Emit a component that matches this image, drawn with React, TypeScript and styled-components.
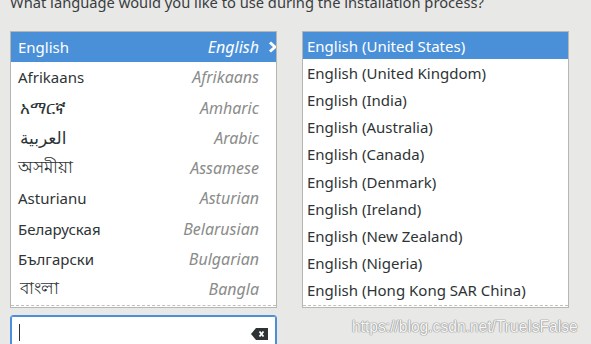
import React from "react";
import styled, { createGlobalStyle } from "styled-components";

const GlobalStyle = createGlobalStyle`
  html, body { margin: 0; padding: 0; }
  body {
    background: #e8e8e7;
    font-family: "Noto Sans", "DejaVu Sans", sans-serif;
    color: #2e3436;
    overflow: hidden;
  }
`;

const Page = styled.div`
  width: 591px;
  height: 344px;
  overflow: hidden;
  position: relative;
  box-sizing: border-box;
  padding-left: 10px;
`;

const Title = styled.div`
  font-size: 14.7px;
  line-height: 16px;
  margin-top: -6px;
  height: 16px;
  color: #3a3d3e;
  white-space: nowrap;
`;

const Columns = styled.div`
  display: grid;
  grid-template-columns: 267px 267px;
  column-gap: 25px;
  margin-top: 21px;
  align-items: start;
`;

const LeftColumn = styled.div`
  display: flex;
  flex-direction: column;
  gap: 7px;
`;

const ListBox = styled.div`
  position: relative;
  height: 277px;
  box-sizing: border-box;
  border: 1px solid #b6b6b3;
  background: #ffffff;
  overflow: hidden;
  &::after {
    content: "";
    position: absolute;
    left: 0;
    right: 0;
    bottom: 1px;
    border-bottom: 1px dashed #c0c0bd;
  }
`;

const LangRow = styled.div<{ $selected?: boolean }>`
  height: 30.25px;
  display: flex;
  align-items: center;
  justify-content: space-between;
  padding: 0 17px 0 7px;
  box-sizing: border-box;
  font-size: 15px;
  background: ${(p) => (p.$selected ? "#4a90d9" : "transparent")};
  color: ${(p) => (p.$selected ? "#ffffff" : "#2e3436")};
  position: relative;
`;

const Native = styled.span<{ $size: number; $indent: number }>`
  white-space: nowrap;
  font-size: ${(p) => p.$size}px;
  padding-left: ${(p) => p.$indent}px;
`;

const English = styled.span<{ $selected?: boolean }>`
  font-style: italic;
  font-size: 16px;
  white-space: nowrap;
  color: ${(p) => (p.$selected ? "#ffffff" : "#8a8c8a")};
`;

const Chevron = styled.svg`
  position: absolute;
  right: -2px;
  top: 50%;
  margin-top: -6px;
`;

const LocaleRow = styled.div<{ $selected?: boolean }>`
  height: 27.2px;
  display: flex;
  align-items: center;
  padding: 0 4px;
  box-sizing: border-box;
  font-size: 15px;
  white-space: nowrap;
  background: ${(p) => (p.$selected ? "#4a90d9" : "transparent")};
  color: ${(p) => (p.$selected ? "#ffffff" : "#2e3436")};
`;

const Entry = styled.div`
  height: 40px;
  box-sizing: border-box;
  border: 1px solid #4a90d9;
  box-shadow: inset 0 0 0 1px #4a90d9;
  background: #ffffff;
  border-radius: 3px 3px 0 0;
  display: flex;
  align-items: flex-start;
  justify-content: space-between;
  padding: 8px 8px 0 8px;
`;

const Caret = styled.div`
  width: 1px;
  height: 17px;
  background: #2e3436;
`;

const ClearIcon = styled.svg`
  margin-top: 4px;
`;

const Watermark = styled.div`
  position: absolute;
  left: 352px;
  top: 318px;
  font-family: "Liberation Sans", Arial, sans-serif;
  font-size: 15.6px;
  color: #f6f6f6;
  text-shadow: 0 0 1px #999999, 0 0 1px #999999, 0 0 1px #999999, 0 0 1px #999999;
  white-space: nowrap;
`;

type Lang = { native: string; eng: string; size: number; indent: number };

const languages: Lang[] = [
  { native: "English", eng: "English", size: 15, indent: 0 },
  { native: "Afrikaans", eng: "Afrikaans", size: 15, indent: 0 },
  { native: "አማርኛ", eng: "Amharic", size: 17, indent: 2 },
  { native: "العربية", eng: "Arabic", size: 17, indent: 2 },
  { native: "অসমীয়া", eng: "Assamese", size: 17, indent: 0 },
  { native: "Asturianu", eng: "Asturian", size: 15, indent: 0 },
  { native: "Беларуская", eng: "Belarusian", size: 15, indent: 0 },
  { native: "Български", eng: "Bulgarian", size: 15, indent: 0 },
  { native: "বাংলা", eng: "Bangla", size: 17, indent: 2 },
];

const locales = [
  "English (United States)",
  "English (United Kingdom)",
  "English (India)",
  "English (Australia)",
  "English (Canada)",
  "English (Denmark)",
  "English (Ireland)",
  "English (New Zealand)",
  "English (Nigeria)",
  "English (Hong Kong SAR China)",
];

export default function App() {
  return (
    <>
      <GlobalStyle />
      <Page>
        <Title>What language would you like to use during the installation process?</Title>
        <Columns>
          <LeftColumn>
            <ListBox>
              {languages.map((l, i) => (
                <LangRow key={l.eng} $selected={i === 0}>
                  <Native $size={l.size} $indent={l.indent}>
                    {l.native}
                  </Native>
                  <English $selected={i === 0}>{l.eng}</English>
                  {i === 0 && (
                    <Chevron width="10" height="12" viewBox="0 0 10 12">
                      <path d="M2 1.5 L7 6 L2 10.5" fill="none" stroke="#ffffff" strokeWidth="3" />
                    </Chevron>
                  )}
                </LangRow>
              ))}
            </ListBox>
            <Entry>
              <Caret />
              <ClearIcon width="17" height="12" viewBox="0 0 17 12">
                <path d="M5 0 H17 V12 H5 L0 6 Z" fill="#2e3436" />
                <path d="M8.5 3.5 L12.5 8.5 M12.5 3.5 L8.5 8.5" stroke="#ffffff" strokeWidth="1.8" />
              </ClearIcon>
            </Entry>
          </LeftColumn>
          <ListBox>
            {locales.map((l, i) => (
              <LocaleRow key={l} $selected={i === 0}>
                {l}
              </LocaleRow>
            ))}
          </ListBox>
        </Columns>
        <Watermark>https://blog.csdn.net/TrueIsFalse</Watermark>
      </Page>
    </>
  );
}
